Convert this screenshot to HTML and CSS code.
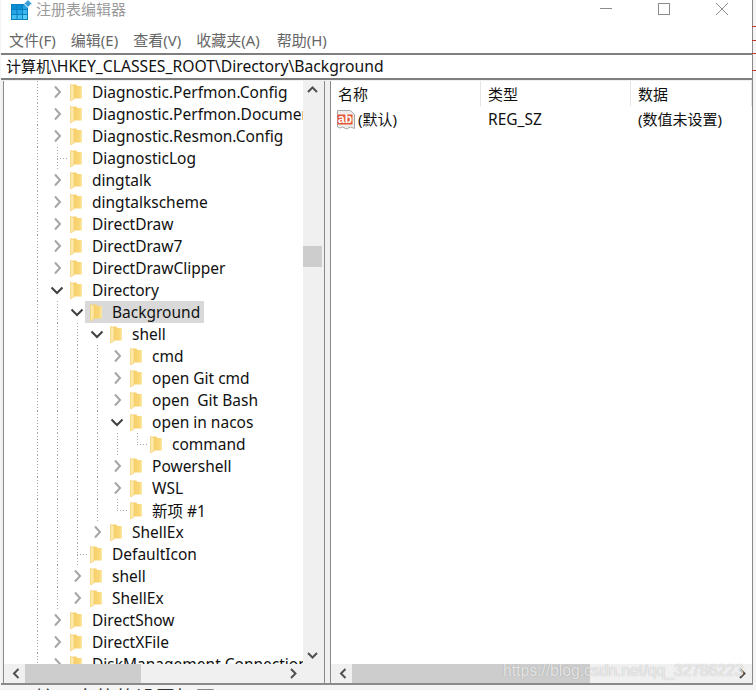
FILE: index.html
```html
<!DOCTYPE html>
<html lang="zh-CN">

<head>
  <meta charset="UTF-8">
  <title>注册表编辑器</title>
  <link rel="stylesheet" href="styles.css">
</head>

<body>
  <svg class="defs" width="0" height="0">
    <defs>
      <linearGradient id="folderFill" x1="0" y1="0" x2="1" y2="0">
        <stop offset="0" stop-color="#f6cf68" />
        <stop offset="0.7" stop-color="#f9d778" />
        <stop offset="1" stop-color="#fde9a6" />
      </linearGradient>
      <symbol id="folder" viewBox="0 0 12 17">
        <path d="M3 0.500h3.500l1 1.500h4.500v12.500H3z" fill="url(#folderFill)" />
        <path d="M0.500 0.500L4 1.500v13.500l-3.500 2z" fill="#ffe9a8" stroke="#f3cd70" stroke-width="0.700" />
      </symbol>
      <symbol id="closed" viewBox="0 0 20 22">
        <path d="M8 5.500L13 11L8 16.500" fill="none" stroke="#a6a6a6" stroke-width="2" />
      </symbol>
      <symbol id="open" viewBox="0 0 20 22">
        <path d="M4.500 8.500L10 14L15.500 8.500" fill="none" stroke="#404040" stroke-width="2" />
      </symbol>
    </defs>
  </svg>

  <div class="window">
    <div class="titlebar">
      <svg class="app-icon" width="22" height="20" viewBox="0 0 22 20">
        <rect x="0" y="4" width="17" height="16" fill="#0b7ebc" />
        <rect x="1" y="5" width="4.500" height="4" fill="#0a8fd6" />
        <rect x="6.500" y="5" width="4.500" height="4" fill="#0a8fd6" />
        <rect x="12" y="5" width="4" height="4" fill="#2aa5e4" />
        <rect x="1" y="10" width="4.500" height="4" fill="#25a6e6" />
        <rect x="6.500" y="10" width="4.500" height="4" fill="#25a6e6" />
        <rect x="12" y="10" width="4" height="4" fill="#3cb8f0" />
        <rect x="1" y="15" width="4.500" height="4" fill="#45c0f2" />
        <rect x="6.500" y="15" width="4.500" height="4" fill="#45c0f2" />
        <rect x="12" y="15" width="4" height="4" fill="#5ccdf6" />
        <path d="M17 -0.500l4 4-4 4-4-4z" fill="#3c9fd8" stroke="#fff" stroke-width="1" />
      </svg>
      <span class="app-title">注册表编辑器</span>
      <div class="controls">
        <svg width="14" height="14" viewBox="0 0 14 14"><path d="M1 6.500h12" stroke="#8c8c8c" /></svg>
        <svg width="14" height="14" viewBox="0 0 14 14"><rect x="1.500" y="1.500" width="11" height="11" fill="none" stroke="#8c8c8c" /></svg>
        <svg width="14" height="14" viewBox="0 0 14 14"><path d="M1 1l12 12M13 1L1 13" stroke="#8c8c8c" /></svg>
      </div>
    </div>

    <div class="menubar">
      <span>文件(F)</span>
      <span>编辑(E)</span>
      <span>查看(V)</span>
      <span>收藏夹(A)</span>
      <span class="menu-help">帮助(H)</span>
    </div>

    <div class="address"><span class="cjk">计算机</span>\HKEY_CLASSES_ROOT\Directory\Background</div>

    <div class="panes">
      <div class="pane tree-pane">
        <div class="pane-body">
          <div class="tree">
            <div class="row"><i class="pipe"></i><svg class="chev"><use href="#closed" /></svg><svg class="folder"><use href="#folder" /></svg><span class="label">Diagnostic.Perfmon.Config</span></div>
            <div class="row"><i class="pipe"></i><svg class="chev"><use href="#closed" /></svg><svg class="folder"><use href="#folder" /></svg><span class="label">Diagnostic.Perfmon.Document</span></div>
            <div class="row"><i class="pipe"></i><svg class="chev"><use href="#closed" /></svg><svg class="folder"><use href="#folder" /></svg><span class="label">Diagnostic.Resmon.Config</span></div>
            <div class="row"><i class="pipe"></i><i class="tee"></i><svg class="folder"><use href="#folder" /></svg><span class="label">DiagnosticLog</span></div>
            <div class="row"><i class="pipe"></i><svg class="chev"><use href="#closed" /></svg><svg class="folder"><use href="#folder" /></svg><span class="label">dingtalk</span></div>
            <div class="row"><i class="pipe"></i><svg class="chev"><use href="#closed" /></svg><svg class="folder"><use href="#folder" /></svg><span class="label">dingtalkscheme</span></div>
            <div class="row"><i class="pipe"></i><svg class="chev"><use href="#closed" /></svg><svg class="folder"><use href="#folder" /></svg><span class="label">DirectDraw</span></div>
            <div class="row"><i class="pipe"></i><svg class="chev"><use href="#closed" /></svg><svg class="folder"><use href="#folder" /></svg><span class="label">DirectDraw7</span></div>
            <div class="row"><i class="pipe"></i><svg class="chev"><use href="#closed" /></svg><svg class="folder"><use href="#folder" /></svg><span class="label">DirectDrawClipper</span></div>
            <div class="row"><i class="pipe"></i><svg class="chev"><use href="#open" /></svg><svg class="folder"><use href="#folder" /></svg><span class="label">Directory</span></div>
            <div class="row"><i class="pipe"></i><i class="pipe"></i><svg class="chev"><use href="#open" /></svg><div class="selected"><svg class="folder"><use href="#folder" /></svg><span class="label">Background</span></div></div>
            <div class="row"><i class="pipe"></i><i class="pipe"></i><i class="pipe"></i><svg class="chev"><use href="#open" /></svg><svg class="folder"><use href="#folder" /></svg><span class="label">shell</span></div>
            <div class="row"><i class="pipe"></i><i class="pipe"></i><i class="pipe"></i><i class="pipe"></i><svg class="chev"><use href="#closed" /></svg><svg class="folder"><use href="#folder" /></svg><span class="label">cmd</span></div>
            <div class="row"><i class="pipe"></i><i class="pipe"></i><i class="pipe"></i><i class="pipe"></i><svg class="chev"><use href="#closed" /></svg><svg class="folder"><use href="#folder" /></svg><span class="label">open Git cmd</span></div>
            <div class="row"><i class="pipe"></i><i class="pipe"></i><i class="pipe"></i><i class="pipe"></i><svg class="chev"><use href="#closed" /></svg><svg class="folder"><use href="#folder" /></svg><span class="label">open &nbsp;Git Bash</span></div>
            <div class="row"><i class="pipe"></i><i class="pipe"></i><i class="pipe"></i><i class="pipe"></i><svg class="chev"><use href="#open" /></svg><svg class="folder"><use href="#folder" /></svg><span class="label">open in nacos</span></div>
            <div class="row"><i class="pipe"></i><i class="pipe"></i><i class="pipe"></i><i class="pipe"></i><i class="pipe"></i><i class="elbow"></i><svg class="folder"><use href="#folder" /></svg><span class="label">command</span></div>
            <div class="row"><i class="pipe"></i><i class="pipe"></i><i class="pipe"></i><i class="pipe"></i><svg class="chev"><use href="#closed" /></svg><svg class="folder"><use href="#folder" /></svg><span class="label">Powershell</span></div>
            <div class="row"><i class="pipe"></i><i class="pipe"></i><i class="pipe"></i><i class="pipe"></i><svg class="chev"><use href="#closed" /></svg><svg class="folder"><use href="#folder" /></svg><span class="label">WSL</span></div>
            <div class="row"><i class="pipe"></i><i class="pipe"></i><i class="pipe"></i><i class="pipe"></i><i class="elbow"></i><svg class="folder"><use href="#folder" /></svg><span class="label">新项 #1</span></div>
            <div class="row"><i class="pipe"></i><i class="pipe"></i><i class="pipe"></i><svg class="chev"><use href="#closed" /></svg><svg class="folder"><use href="#folder" /></svg><span class="label">ShellEx</span></div>
            <div class="row"><i class="pipe"></i><i class="pipe"></i><i class="tee"></i><svg class="folder"><use href="#folder" /></svg><span class="label">DefaultIcon</span></div>
            <div class="row"><i class="pipe"></i><i class="pipe"></i><svg class="chev"><use href="#closed" /></svg><svg class="folder"><use href="#folder" /></svg><span class="label">shell</span></div>
            <div class="row"><i class="pipe"></i><i class="pipe"></i><svg class="chev"><use href="#closed" /></svg><svg class="folder"><use href="#folder" /></svg><span class="label">ShellEx</span></div>
            <div class="row"><i class="pipe"></i><svg class="chev"><use href="#closed" /></svg><svg class="folder"><use href="#folder" /></svg><span class="label">DirectShow</span></div>
            <div class="row"><i class="pipe"></i><svg class="chev"><use href="#closed" /></svg><svg class="folder"><use href="#folder" /></svg><span class="label">DirectXFile</span></div>
            <div class="row"><i class="pipe"></i><svg class="chev"><use href="#closed" /></svg><svg class="folder"><use href="#folder" /></svg><span class="label">DiskManagement Connection</span></div>
          </div>
          <div class="vscroll">
            <svg class="arrow" width="19" height="18" viewBox="0 0 19 18"><path d="M5 11L9.500 6.500L14 11" fill="none" stroke="#505050" stroke-width="2" /></svg>
            <div class="vtrack"><div class="vthumb"></div></div>
            <svg class="arrow" width="19" height="18" viewBox="0 0 19 18"><path d="M5 7L9.500 11.500L14 7" fill="none" stroke="#505050" stroke-width="2" /></svg>
          </div>
        </div>
        <div class="hscroll tree-hscroll">
          <svg class="arrow" width="21" height="19" viewBox="0 0 21 19"><path d="M14.500 5L10 9.500L14.500 14" fill="none" stroke="#505050" stroke-width="2" /></svg>
          <div class="htrack"><div class="hthumb"></div></div>
          <svg class="arrow" width="21" height="19" viewBox="0 0 21 19"><path d="M9 5L13.500 9.500L9 14" fill="none" stroke="#505050" stroke-width="2" /></svg>
        </div>
      </div>

      <div class="pane list-pane">
        <div class="pane-body list-body">
          <div class="list-head">
            <div class="col col-name">名称</div>
            <div class="col col-type">类型</div>
            <div class="col col-data">数据</div>
          </div>
          <div class="list-row">
            <div class="col-name value-name">
              <svg class="ab-icon" width="20" height="21" viewBox="0 0 20 21">
                <path d="M1.500 1.500h13l4 4v14l-4-1.500-4 2-4-2-3 1-2-1z" fill="#efedea" stroke="#a8a8a8" />
                <rect x="1.500" y="5.500" width="15" height="10" fill="#e2583a" />
                <text x="9" y="14" class="ab-text">ab</text>
              </svg>
              <span class="cjk">(默认)</span>
            </div>
            <div class="col-type">REG_SZ</div>
            <div class="col-data cjk">(数值未设置)</div>
          </div>
        </div>
        <div class="hscroll">
          <svg class="arrow" width="21" height="19" viewBox="0 0 21 19"><path d="M14.500 5L10 9.500L14.500 14" fill="none" stroke="#505050" stroke-width="2" /></svg>
          <div class="htrack"><div class="hthumb list-thumb"></div></div>
          <svg class="arrow" width="21" height="19" viewBox="0 0 21 19"><path d="M9 5L13.500 9.500L9 14" fill="none" stroke="#505050" stroke-width="2" /></svg>
        </div>
      </div>
    </div>
  </div>

  <div class="behind">了 接下来的的设置打开</div>
  <div class="edge-ticks"></div>
  <div class="watermark">https://blog.csdn.net/qq_32786223</div>
</body>

</html>
```

FILE: styles.css
```css
* {
  box-sizing: border-box;
}

html,
body {
  height: 100%;
}

body {
  margin: 0;
  background: #f4f4f4;
  font-family: "Noto Sans", "Noto Sans CJK SC", sans-serif;
  font-size: 15.5px;
  color: #111;
  overflow: hidden;
}

.defs {
  position: absolute;
}

.cjk {
  font-size: 15px;
}

.window {
  width: 752px;
  height: 685px;
  margin-left: 1px;
  background: #fff;
  display: flex;
  flex-direction: column;
  border-right: 1px solid #8a8a8a;
  border-bottom: 2px solid #8a8a8a;
}

/* title bar */
.titlebar {
  height: 30px;
  flex: none;
  display: flex;
  align-items: flex-start;
  padding: 0 23px 0 10px;
}

.app-icon {
  flex: none;
}

.app-title {
  margin-left: 3px;
  margin-top: -2px;
  font-size: 15px;
  color: #9a9a9a;
}

.controls {
  margin-left: auto;
  display: flex;
  gap: 44px;
  padding-top: 2px;
}

.menubar {
  height: 23px;
  flex: none;
  display: flex;
  gap: 15px;
  padding-left: 8px;
  font-size: 15px;
  line-height: 21px;
  color: #666;
}

.menu-help {
  margin-left: 2px;
}

.address {
  height: 27px;
  flex: none;
  border-top: 2px solid #7f7f7f;
  border-bottom: 2px solid #7f7f7f;
  padding-left: 5px;
  font-size: 15.7px;
  line-height: 23px;
  color: #111;
  white-space: nowrap;
}

/* panes */
.panes {
  flex: 1;
  min-height: 0;
  display: flex;
  gap: 5px;
  background: #f0f0f0;
  padding: 1px 0 0 2px;
}

.pane {
  background: #fff;
  display: flex;
  flex-direction: column;
  min-width: 0;
  border-left: 1px solid #8a8a8a;
  overflow: hidden;
}

.tree-pane {
  width: 322px;
  flex: none;
  border-right: 1px solid #8a8a8a;
}

.list-pane {
  flex: 1;
}

.pane-body {
  flex: 1;
  min-height: 0;
  display: flex;
  overflow: hidden;
}

.list-body {
  flex-direction: column;
}

/* tree */
.tree {
  flex: 1;
  min-width: 0;
  padding-left: 23px;
  overflow: hidden;
}

.row {
  height: 22px;
  display: flex;
  align-items: center;
  white-space: nowrap;
}

.pipe,
.tee,
.elbow,
.chev {
  width: 20px;
  height: 22px;
  flex: none;
  display: block;
}

.pipe {
  background: repeating-linear-gradient(#a8a8a8 0 1px, transparent 1px 3px) 10px 0 / 1px 100% no-repeat;
}

.tee {
  background:
    repeating-linear-gradient(#a8a8a8 0 1px, transparent 1px 3px) 10px 0 / 1px 100% no-repeat,
    repeating-linear-gradient(90deg, #a8a8a8 0 1px, transparent 1px 3px) 10px 11px / 10px 1px no-repeat;
}

.elbow {
  background:
    repeating-linear-gradient(#a8a8a8 0 1px, transparent 1px 3px) 10px 0 / 1px 11px no-repeat,
    repeating-linear-gradient(90deg, #a8a8a8 0 1px, transparent 1px 3px) 10px 11px / 10px 1px no-repeat;
}

.folder {
  width: 12px;
  height: 17px;
  flex: none;
  margin-left: 3px;
}

.label {
  margin-left: 10px;
}

.selected {
  height: 22px;
  display: flex;
  align-items: center;
  background: #d9d9d9;
  margin-left: -2px;
  padding: 0 4px 0 2px;
}

/* scrollbars */
.vscroll {
  width: 21px;
  flex: none;
  background: #f0f0f0;
  display: flex;
  flex-direction: column;
}

.vtrack {
  flex: 1;
  padding-top: 147px;
}

.vthumb {
  width: 19px;
  height: 21px;
  background: #cdcdcd;
}

.hscroll {
  height: 19px;
  flex: none;
  background: #f0f0f0;
  display: flex;
}

.tree-hscroll {
  border-right: 21px solid #f0f0f0;
}

.arrow {
  flex: none;
  display: block;
}

.htrack {
  flex: 1;
}

.hthumb {
  width: 116px;
  height: 100%;
  background: #cdcdcd;
}

.list-thumb {
  width: 238px;
}

/* list */
.list-head {
  height: 26px;
  flex: none;
  display: flex;
}

.col {
  padding-left: 7px;
  font-size: 15px;
  line-height: 26px;
  border-right: 1px solid #e5e5e5;
  height: 25px;
}

.col-name {
  width: 150px;
  flex: none;
}

.col-type {
  width: 150px;
  flex: none;
}

.col-data {
  flex: 1;
}

.list-row {
  display: flex;
  height: 22px;
  line-height: 22px;
  margin-top: 1px;
}

.list-row .col-type,
.list-row .col-data {
  padding-left: 7px;
}

.value-name {
  display: flex;
  align-items: center;
  padding-left: 5px;
  gap: 2px;
}

.ab-text {
  font-family: "Liberation Sans", sans-serif;
  font-size: 12px;
  font-weight: bold;
  fill: #fff;
  text-anchor: middle;
}

/* page behind the window, only its edges show */
.behind {
  height: 5px;
  padding-left: 10px;
  overflow: hidden;
  font-size: 20px;
  line-height: 28px;
  color: #333;
  white-space: nowrap;
}

.edge-ticks {
  position: absolute;
  left: 752px;
  top: 26px;
  width: 4px;
  height: 1px;
  background: #c0392b;
  box-shadow: 0 14px #c0392b, 0 27px #c0392b, 0 44px #c0392b;
}

.watermark {
  position: absolute;
  left: 503px;
  top: 662px;
  font-family: "Liberation Sans", sans-serif;
  font-size: 15.7px;
  color: rgba(255, 255, 255, 0.75);
  text-shadow: 0 0 1px rgba(90, 90, 90, 0.5);
  white-space: nowrap;
}
```
